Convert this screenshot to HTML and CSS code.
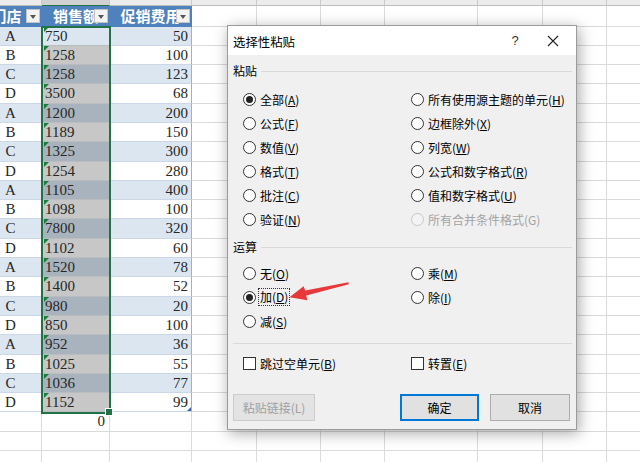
FILE: index.html
```html
<!DOCTYPE html>
<html lang="zh-CN">
<head>
    <meta charset="UTF-8">
    <title>选择性粘贴</title>
    <link rel="stylesheet" href="styles.css">
</head>
<body>
    <!-- Worksheet -->
    <div class="sheet" id="sheet">
        <div class="selection"><span class="handle"></span></div>
    </div>

    <!-- Paste Special dialog -->
    <div class="dialog">
        <div class="titlebar">
            <span class="title">选择性粘贴</span>
            <span class="help">?</span>
            <span class="close">
                <svg width="12" height="12" viewBox="0 0 12 12"><path d="M1 1 L11 11 M11 1 L1 11" stroke="#222" stroke-width="1.1" fill="none"/></svg>
            </span>
        </div>
        <div class="body">
            <div class="group"><span>粘贴</span><i class="line"></i></div>
            <div class="options">
                <label class="opt"><span class="radio checked"></span><span>全部(<u>A</u>)</span></label>
                <label class="opt"><span class="radio"></span><span>所有使用源主题的单元(<u>H</u>)</span></label>
                <label class="opt"><span class="radio"></span><span>公式(<u>F</u>)</span></label>
                <label class="opt"><span class="radio"></span><span>边框除外(<u>X</u>)</span></label>
                <label class="opt"><span class="radio"></span><span>数值(<u>V</u>)</span></label>
                <label class="opt"><span class="radio"></span><span>列宽(<u>W</u>)</span></label>
                <label class="opt"><span class="radio"></span><span>格式(<u>T</u>)</span></label>
                <label class="opt"><span class="radio"></span><span>公式和数字格式(<u>R</u>)</span></label>
                <label class="opt"><span class="radio"></span><span>批注(<u>C</u>)</span></label>
                <label class="opt"><span class="radio"></span><span>值和数字格式(<u>U</u>)</span></label>
                <label class="opt"><span class="radio"></span><span>验证(<u>N</u>)</span></label>
                <label class="opt disabled"><span class="radio"></span><span>所有合并条件格式(G)</span></label>
            </div>

            <div class="group second"><span>运算</span><i class="line"></i></div>
            <div class="options ops">
                <label class="opt"><span class="radio"></span><span>无(<u>O</u>)</span></label>
                <label class="opt"><span class="radio"></span><span>乘(<u>M</u>)</span></label>
                <label class="opt"><span class="radio checked"></span><span class="focus">加(<u>D</u>)</span></label>
                <label class="opt"><span class="radio"></span><span>除(<u>I</u>)</span></label>
                <label class="opt"><span class="radio"></span><span>减(<u>S</u>)</span></label>
            </div>

            <i class="line sep"></i>

            <div class="options checks">
                <label class="opt"><span class="check"></span><span>跳过空单元(<u>B</u>)</span></label>
                <label class="opt"><span class="check"></span><span>转置(<u>E</u>)</span></label>
            </div>

            <div class="buttons">
                <button class="btn disabled">粘贴链接(L)</button>
                <button class="btn primary">确定</button>
                <button class="btn cancel">取消</button>
            </div>
        </div>
    </div>

    <!-- red annotation arrow -->
    <svg class="arrow" viewBox="0 0 640 462">
        <polygon points="348.5,282.3 305.2,290.6 303.6,286.2 289.5,297.3 307.4,300.2 306.2,295.6 348.8,284.2" fill="#e8383a"/>
    </svg>

    <script>
        const letters = ['B', 'C', 'D', 'E', 'F', 'G', 'H', 'I', 'J', 'K'];
        const data = [
            ['A', '750', '50'], ['B', '1258', '100'], ['C', '1258', '123'], ['D', '3500', '68'],
            ['A', '1200', '200'], ['B', '1189', '150'], ['C', '1325', '300'], ['D', '1254', '280'],
            ['A', '1105', '400'], ['B', '1098', '100'], ['C', '7800', '320'], ['D', '1102', '60'],
            ['A', '1520', '78'], ['B', '1400', '52'], ['C', '980', '20'], ['D', '850', '100'],
            ['A', '952', '36'], ['B', '1025', '55'], ['C', '1036', '77'], ['D', '1152', '99']
        ];
        const sheet = document.getElementById('sheet');

        function addRow(cls, cells) {
            const row = document.createElement('div');
            row.className = 'row ' + cls;
            for (let i = 0; i < letters.length; i++) {
                const cell = document.createElement('div');
                const c = cells[i] || {};
                cell.className = c.cls || '';
                cell.innerHTML = c.html || '';
                row.appendChild(cell);
            }
            sheet.appendChild(row);
        }

        // column letters (mostly scrolled off the top)
        addRow('colhead', letters.map((l, i) => ({ cls: i === 1 ? 'sel' : '', html: '<span>' + l + '</span>' })));

        // table header
        const dd = '<span class="dd"></span>';
        addRow('thead', [
            { cls: 'th first', html: '门店' + dd },
            { cls: 'th', html: '销售额' + dd },
            { cls: 'th', html: '促销费用' + dd }
        ]);

        data.forEach((r, i) => {
            const band = i % 2 === 0 ? ' band' : '';
            addRow('', [
                { cls: 'tb' + band, html: r[0] },
                { cls: 'tc' + band + (i === 0 ? ' active' : ''), html: '<span class="tri"></span>' + r[1] },
                { cls: 'td' + band + (i === data.length - 1 ? ' last' : ''), html: r[2] }
            ]);
        });

        addRow('', [{}, { cls: 'num', html: '0' }]);
        addRow('', []);
        addRow('', []);
    </script>
</body>
</html>
```

FILE: styles.css
```css
body {
    margin: 0;
    width: 640px;
    height: 462px;
    overflow: hidden;
    position: relative;
    background-color: #fff;
    font-family: "Liberation Serif", "Noto Sans CJK SC", serif;
}

/* ---- worksheet ---- */
.sheet {
    position: relative;
    margin-left: -20px;
    width: 720px;
}
.row {
    display: flex;
}
.row > div {
    flex: none;
    position: relative;
    box-sizing: border-box;
    height: 19.3px;
    border-right: 1px solid #dadada;
    border-bottom: 1px solid #dadada;
    overflow: hidden;
    white-space: nowrap;
    font-size: 15px;
    line-height: 18px;
    color: #262626;
}
.row > :nth-child(1) { width: 62px; }
.row > :nth-child(2) { width: 68px; }
.row > :nth-child(3) { width: 82px; }
.row > :nth-child(4) { width: 65px; }
.row > :nth-child(5) { width: 64px; }
.row > :nth-child(6) { width: 64px; }
.row > :nth-child(7) { width: 93px; }
.row > :nth-child(8) { width: 65px; }
.row > :nth-child(9) { width: 64px; }
.row > :nth-child(10) { width: 64px; }

.colhead > div {
    height: 6px;
    background-color: #ececec;
    border-right-color: #c9c9c9;
    border-bottom-color: #bdbdbd;
    text-align: center;
    font-family: "Liberation Sans", sans-serif;
    font-size: 13px;
    color: #555;
}
.colhead > div span {
    display: block;
    margin-top: -11px;
    line-height: 14px;
}
.colhead > .sel {
    background-color: #d2d2d2;
    border-bottom: 1px solid #217346;
}

.thead > div {
    height: 20.5px;
}
.thead > .th {
    background-color: #4f81bd;
    border-right-color: #4f81bd;
    border-bottom-color: #4f81bd;
    color: #fff;
    font-family: "Noto Sans CJK SC", sans-serif;
    font-weight: bold;
    font-size: 15px;
    line-height: 20px;
    text-align: center;
}
.thead > .th.first {
    text-indent: -8px;
}
.dd {
    position: absolute;
    right: 1px;
    top: 3px;
    width: 14px;
    height: 14px;
    box-sizing: border-box;
    background-color: #f3f3f3;
    border: 1px solid #c4c4c4;
}
.dd::after {
    content: "";
    position: absolute;
    left: 3px;
    top: 5px;
    border-left: 3.5px solid transparent;
    border-right: 3.5px solid transparent;
    border-top: 4px solid #555;
}

.row > .tb {
    text-align: center;
    border-bottom-color: #cbd7e6;
    border-right-color: #cbd7e6;
}
.row > .tc {
    padding-left: 3px;
    background-color: #c7c7c7;
    border-bottom-color: #b9bcc0;
}
.row > .tc.band {
    background-color: #a9b3be;
}
.row > .tc.active {
    background-color: #dce6f1;
}
.row > .td {
    text-align: right;
    padding-right: 3px;
    border-bottom-color: #cbd7e6;
    border-right-color: #95b3d7;
}
.row > .band {
    background-color: #dce6f1;
}
.row > .num {
    text-align: right;
    padding-right: 4px;
}
.tri {
    position: absolute;
    left: 2px;
    top: 0;
    border-top: 5px solid #1e7b3c;
    border-right: 5px solid transparent;
}
.td.last::after {
    content: "";
    position: absolute;
    right: 0;
    bottom: 0;
    border-bottom: 4px solid #3b5fbf;
    border-left: 4px solid transparent;
}

.selection {
    position: absolute;
    left: 61px;
    top: 25.5px;
    width: 70px;
    height: 388px;
    box-sizing: border-box;
    border: 2px solid #217346;
    z-index: 2;
}
.handle {
    position: absolute;
    right: -4px;
    bottom: -4px;
    width: 6px;
    height: 6px;
    background-color: #217346;
    border: 1px solid #fff;
}

/* ---- dialog ---- */
.dialog {
    position: absolute;
    left: 227px;
    top: 25px;
    width: 350px;
    height: 405px;
    box-sizing: border-box;
    border: 1px solid #9b9b9b;
    background-color: #f0f0f0;
    box-shadow: 2px 3px 14px rgba(0, 0, 0, 0.35);
    font-family: "Noto Sans CJK SC", sans-serif;
    font-size: 12px;
    color: #000;
    z-index: 5;
}
.titlebar {
    display: flex;
    align-items: center;
    height: 29px;
    padding-left: 5px;
    background-color: #fff;
}
.title {
    flex: 1;
    font-size: 12.4px;
    padding-top: 2px;
}
.help {
    width: 30px;
    text-align: center;
    font-family: "Liberation Sans", sans-serif;
    font-size: 13px;
    color: #333;
}
.close {
    width: 46px;
    display: flex;
    justify-content: center;
}

.body {
    padding: 8px 4px 8px 5px;
}
.group {
    display: flex;
    align-items: center;
    gap: 4px;
    height: 16px;
    line-height: 16px;
}
.group.second {
    margin-top: 8px;
}
.line {
    flex: 1;
    height: 1px;
    background-color: #d9d9d9;
}
.line.sep {
    display: block;
    margin-top: 10px;
}

.options {
    display: grid;
    grid-template-columns: 168px 1fr;
    margin-top: 8px;
    padding-left: 10px;
}
.options.ops {
    margin-top: 6px;
}
.options.checks {
    margin-top: 7px;
}
.opt {
    display: flex;
    align-items: center;
    gap: 4px;
    height: 24px;
    white-space: nowrap;
}
.opt.disabled {
    color: #a3a3a3;
}
.radio {
    flex: none;
    position: relative;
    width: 13px;
    height: 13px;
    box-sizing: border-box;
    border: 1px solid #333;
    border-radius: 50%;
    background-color: #fff;
}
.radio.checked::after {
    content: "";
    position: absolute;
    left: 2px;
    top: 2px;
    width: 7px;
    height: 7px;
    border-radius: 50%;
    background-color: #222;
}
.disabled .radio {
    border-color: #c6c6c6;
    background-color: #f3f3f3;
}
.check {
    flex: none;
    width: 13px;
    height: 13px;
    box-sizing: border-box;
    border: 1px solid #333;
    background-color: #fff;
}
.focus {
    margin-left: -2px;
    padding: 0 1px;
    border: 1px dotted #333;
    line-height: 16px;
}

.buttons {
    display: flex;
    margin-top: 19px;
    padding-right: 2px;
}
.btn {
    height: 27px;
    box-sizing: border-box;
    border: 1px solid #adadad;
    background-color: #e1e1e1;
    font-family: "Noto Sans CJK SC", sans-serif;
    font-size: 12px;
    color: #000;
    padding: 0;
}
.btn.disabled {
    width: 82px;
    color: #a0a0a0;
    border-color: #cccccc;
    background-color: #e3e3e3;
}
.btn.primary {
    width: 79px;
    margin-left: auto;
    border: 2px solid #0078d7;
}
.btn.cancel {
    width: 80px;
    margin-left: 11px;
}

.arrow {
    position: absolute;
    left: 0;
    top: 0;
    width: 640px;
    height: 462px;
    z-index: 6;
}
```
